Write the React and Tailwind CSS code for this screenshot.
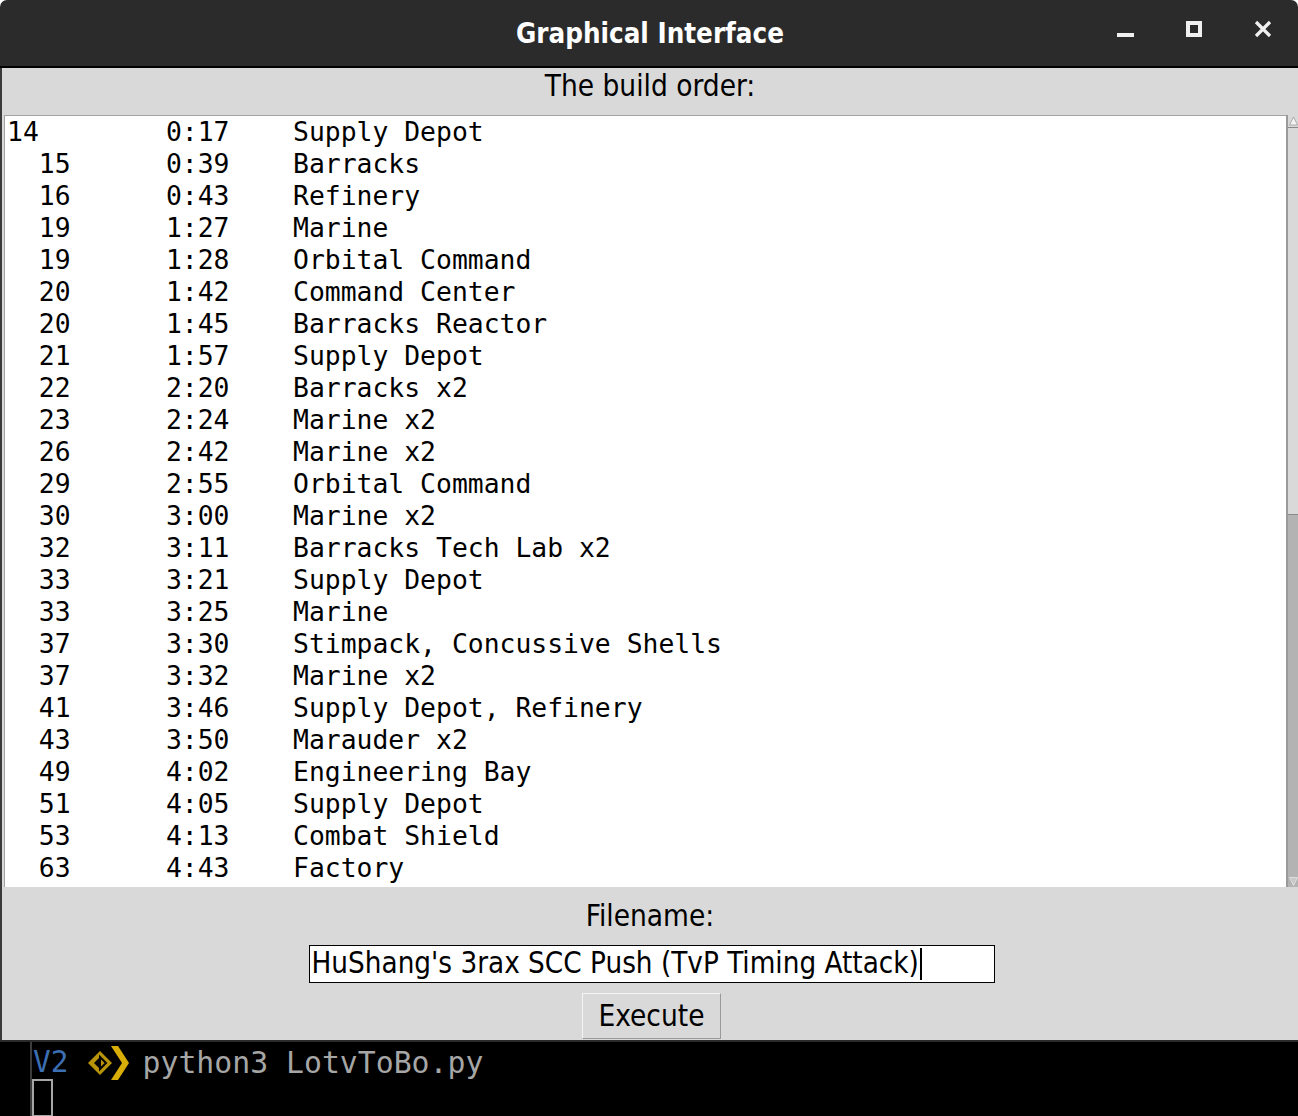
import React from "react";

const rows = [
  ["14", "0:17", "Supply Depot"],
  ["  15", "0:39", "Barracks"],
  ["  16", "0:43", "Refinery"],
  ["  19", "1:27", "Marine"],
  ["  19", "1:28", "Orbital Command"],
  ["  20", "1:42", "Command Center"],
  ["  20", "1:45", "Barracks Reactor"],
  ["  21", "1:57", "Supply Depot"],
  ["  22", "2:20", "Barracks x2"],
  ["  23", "2:24", "Marine x2"],
  ["  26", "2:42", "Marine x2"],
  ["  29", "2:55", "Orbital Command"],
  ["  30", "3:00", "Marine x2"],
  ["  32", "3:11", "Barracks Tech Lab x2"],
  ["  33", "3:21", "Supply Depot"],
  ["  33", "3:25", "Marine"],
  ["  37", "3:30", "Stimpack, Concussive Shells"],
  ["  37", "3:32", "Marine x2"],
  ["  41", "3:46", "Supply Depot, Refinery"],
  ["  43", "3:50", "Marauder x2"],
  ["  49", "4:02", "Engineering Bay"],
  ["  51", "4:05", "Supply Depot"],
  ["  53", "4:13", "Combat Shield"],
  ["  63", "4:43", "Factory"],
];

const sans = { fontFamily: '"DejaVu Sans Condensed", "DejaVu Sans", sans-serif' };
const mono = { fontFamily: '"DejaVu Sans Mono", monospace' };

export default function App() {
  return (
    <div className="w-[1298px] h-[1116px] bg-white flex flex-col overflow-hidden">
      {/* Title bar */}
      <div className="h-[66px] bg-[#2b2b2b] rounded-t-[7px] flex items-center relative shrink-0">
        <div className="flex-1 text-center text-white font-bold text-[27.5px] pt-[1px] pl-[2px]" style={sans}>
          Graphical Interface
        </div>
        <div className="absolute right-[26px] top-[20px] flex items-center">
          <div className="w-[17px] h-[4px] bg-[#f0f0f0] mt-[12px] mr-[52px]" />
          <div className="w-[16px] h-[16px] border-[4px] border-[#f0f0f0] mr-[52px]" />
          <svg width="18" height="18" viewBox="0 0 18 18">
            <path d="M2 2 L16 16 M16 2 L2 16" stroke="#f0f0f0" strokeWidth="3.2" />
          </svg>
        </div>
      </div>
      <div className="h-[2px] bg-black shrink-0" />

      {/* Window content */}
      <div className="h-[972px] bg-[#d9d9d9] flex flex-col shrink-0 border-l-[2px] border-[#3a3a3a]">
        <div className="h-[47px] flex items-center justify-center text-[29.5px] text-black pb-[10px]" style={sans}>
          The build order:
        </div>
        <div className="flex h-[772px] ml-[2px]">
          <div className="flex-1 bg-white border-t border-l border-[#a3a3a3] pl-[2px] overflow-hidden">
            {rows.map((r, i) => (
              <div
                key={i}
                className="h-[32px] leading-[32px] text-[26.4px] text-black whitespace-pre"
                style={mono}
              >
                {r[0].padEnd(10) + r[1].padEnd(8) + r[2]}
              </div>
            ))}
          </div>
          <div className="w-[12px] flex flex-col bg-[#b3b3b3] border-l-[2px] border-[#9a9a9a]">
            <div className="h-[13px] bg-[#d9d9d9] flex items-center justify-center border-b border-[#8a8a8a]">
              <svg width="9" height="10" viewBox="0 0 9 10">
                <path d="M4.5 1 L8.5 9 L0.5 9 Z" fill="#f4f4f4" stroke="#9a9a9a" strokeWidth="0.8" />
              </svg>
            </div>
            <div className="h-[387px] bg-[#d9d9d9] border-b border-[#8a8a8a]" />
            <div className="flex-1" />
            <div className="h-[11px] flex items-center justify-center">
              <svg width="9" height="9" viewBox="0 0 9 9">
                <path d="M0.5 0.5 L8.5 0.5 L4.5 8.5 Z" fill="#c8c8c8" stroke="#e6e6e6" strokeWidth="0.8" />
              </svg>
            </div>
          </div>
        </div>
        <div className="h-[58px] flex items-center justify-center text-[29.5px] text-black pt-[1px]" style={sans}>
          Filename:
        </div>
        <div className="flex justify-center">
          <div className="w-[686px] h-[38px] bg-white border border-black ml-[3px] flex items-center pl-[2px] text-[29.3px] text-black" style={sans}>
            <span>HuShang's 3rax SCC Push (TvP Timing Attack)</span>
            <span className="inline-block w-[2px] h-[32px] bg-black ml-[1px]" />
          </div>
        </div>
        <div className="flex justify-center mt-[10px]">
          <div
            className="w-[139px] h-[46px] bg-[#d9d9d9] border border-t-[#f4f4f4] border-l-[#f4f4f4] border-r-[#9a9a9a] border-b-[#9a9a9a] flex items-center justify-center text-[29.5px] text-black ml-[3px]"
            style={sans}
          >
            Execute
          </div>
        </div>
      </div>

      {/* Terminal */}
      <div className="flex-1 bg-black border-t-[2px] border-[#2a2a2a] flex">
        <div className="w-[32px] border-r-[2px] border-[#3c3c3c]" />
        <div className="flex flex-col">
          <div className="flex items-center h-[40px] pt-[2px]">
            <span className="text-[29.5px] text-[#3c6fb4] leading-none ml-[1px]" style={mono}>V2</span>
            <svg width="44" height="40" viewBox="0 0 44 40" className="ml-[18px]">
              <path d="M1 20 L13 8 L25 20 L13 32 Z" fill="#b8940a" />
              <path d="M7 20 L13 14 L13 26 Z" fill="#000" />
              <path d="M13 14 L19 20 L13 26 Z" fill="none" stroke="#000" strokeWidth="2" />
              <path d="M24 3 L31 3 L42 20 L31 37 L24 37 L35 20 Z" fill="#d8ae06" />
            </svg>
            <span className="text-[29.8px] text-[#a6a6a6] leading-none ml-[12px]" style={mono}>
              python3 LotvToBo.py
            </span>
          </div>
          <div className="w-[21px] h-[38px] border-[2px] border-[#a6a6a6] mt-[-3px]" />
        </div>
      </div>
    </div>
  );
}
